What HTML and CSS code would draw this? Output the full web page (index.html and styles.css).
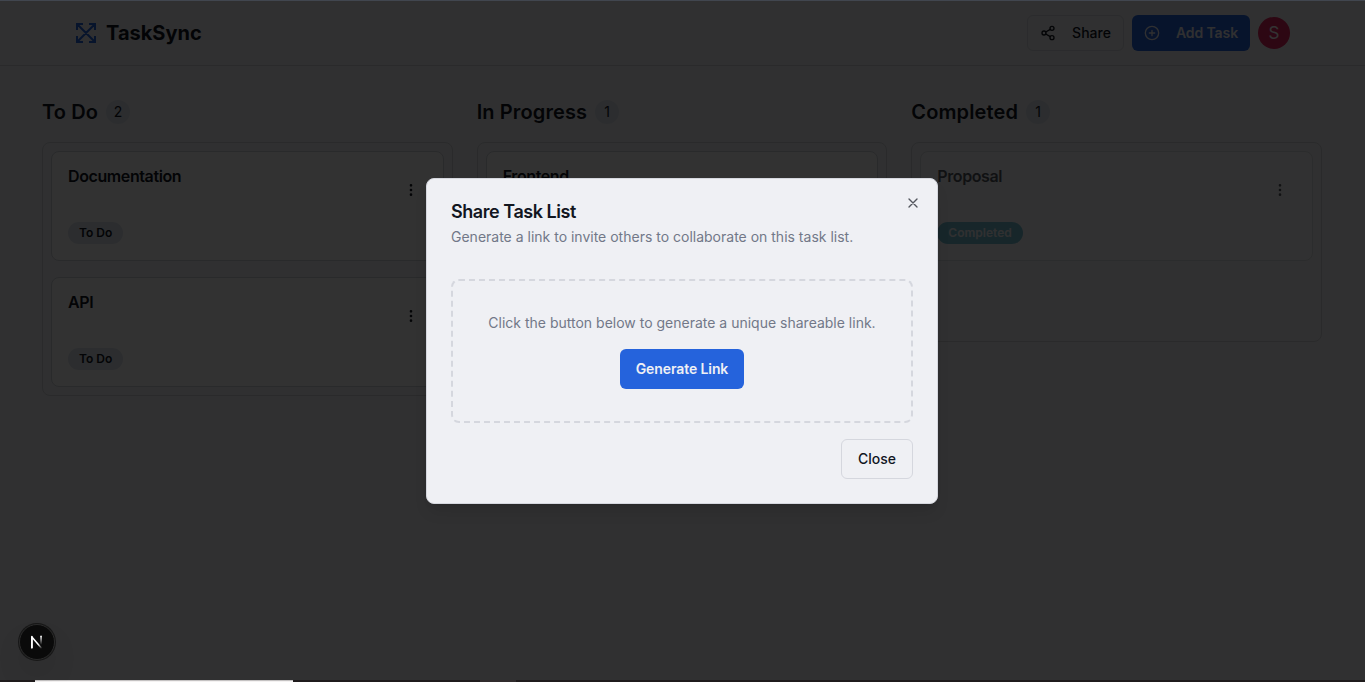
FILE: index.html
```html
<!DOCTYPE html>
<html lang="en">
<head>
<meta charset="utf-8">
<title>TaskSync</title>
<link rel="stylesheet" href="styles.css">
</head>
<body>
<div class="app">
  <header class="header">
    <div class="header-inner">
      <div class="brand">
        <svg class="brand-icon" viewBox="0 0 24 24"><path d="M9 3H3v6M15 3h6v6M9 21H3v-6M15 21h6v-6M3 3l18 18M21 3L3 21"/></svg>
        <span>TaskSync</span>
      </div>
      <div class="actions">
        <button class="btn btn-sm btn-outline"><svg class="icon" viewBox="0 0 24 24"><circle cx="18" cy="5" r="3"/><circle cx="6" cy="12" r="3"/><circle cx="18" cy="19" r="3"/><path d="M8.59 13.51l6.83 3.98M15.41 6.51l-6.82 3.98"/></svg>Share</button>
        <button class="btn btn-sm btn-primary"><svg class="icon" viewBox="0 0 24 24"><circle cx="12" cy="12" r="10"/><path d="M8 12h8M12 8v8"/></svg>Add Task</button>
        <div class="avatar">S</div>
      </div>
    </div>
  </header>
  <main class="board">
    <section class="column">
      <h2 class="column-title">To Do <span class="count">2</span></h2>
      <div class="list">
        <article class="card">
          <h3 class="card-title">Documentation</h3>
          <svg class="dots" viewBox="0 0 24 24"><circle cx="12" cy="5" r="1"/><circle cx="12" cy="12" r="1"/><circle cx="12" cy="19" r="1"/></svg>
          <span class="badge">To Do</span>
        </article>
        <article class="card">
          <h3 class="card-title">API</h3>
          <svg class="dots" viewBox="0 0 24 24"><circle cx="12" cy="5" r="1"/><circle cx="12" cy="12" r="1"/><circle cx="12" cy="19" r="1"/></svg>
          <span class="badge">To Do</span>
        </article>
      </div>
    </section>
    <section class="column">
      <h2 class="column-title">In Progress <span class="count">1</span></h2>
      <div class="list">
        <article class="card">
          <h3 class="card-title">Frontend</h3>
        </article>
      </div>
    </section>
    <section class="column">
      <h2 class="column-title">Completed <span class="count">1</span></h2>
      <div class="list">
        <article class="card card-done">
          <h3 class="card-title">Proposal</h3>
          <svg class="dots" viewBox="0 0 24 24"><circle cx="12" cy="5" r="1"/><circle cx="12" cy="12" r="1"/><circle cx="12" cy="19" r="1"/></svg>
          <span class="badge badge-done">Completed</span>
        </article>
      </div>
    </section>
  </main>
</div>
<div class="overlay">
  <div class="dialog">
    <svg class="dialog-x" viewBox="0 0 24 24"><path d="M18 6L6 18M6 6l12 12"/></svg>
    <div class="dialog-head">
      <h2 class="dialog-title">Share Task List</h2>
      <p class="muted">Generate a link to invite others to collaborate on this task list.</p>
    </div>
    <div class="dropzone">
      <p class="muted">Click the button below to generate a unique shareable link.</p>
      <button class="btn btn-primary">Generate Link</button>
    </div>
    <div class="dialog-foot"><button class="btn btn-outline">Close</button></div>
  </div>
</div>
<div class="top-edge"></div>
<div class="bottom-edge"><span class="edge-light"></span><span class="edge-tab"></span></div>
<div class="dev-badge">
  <svg viewBox="0 0 36 36">
    <defs>
      <linearGradient id="diag" gradientUnits="userSpaceOnUse" x1="18" y1="18" x2="23" y2="25"><stop offset="0.3" stop-color="#fff"/><stop offset="1" stop-color="#fff" stop-opacity="0"/></linearGradient>
      <linearGradient id="stem" gradientUnits="userSpaceOnUse" x1="0" y1="12" x2="0" y2="21"><stop offset="0" stop-color="#fff"/><stop offset="1" stop-color="#fff" stop-opacity="0"/></linearGradient>
    </defs>
    <path d="M12.6 24V12.8L23 25" fill="none" stroke="url(#diag)" stroke-width="1.6"/>
    <path d="M12.6 24V12.2" stroke="#fff" stroke-width="1.6"/>
    <path d="M22.3 12v9" stroke="url(#stem)" stroke-width="1.6"/>
  </svg>
</div>
</body>
</html>
```

FILE: styles.css
```css
* { box-sizing: border-box; margin: 0; }
body {
  width: 1365px;
  height: 682px;
  overflow: hidden;
  position: relative;
  background: #eff0f4;
  color: #12161f;
  font: 14px/20px Inter, "Liberation Sans", sans-serif;
}
svg { display: block; fill: none; stroke: currentColor; stroke-width: 2; stroke-linecap: round; stroke-linejoin: round; flex: none; }
.app { padding-top: 1px; }
.header { height: 65px; border-bottom: 1px solid #d0d3d8; }
.header-inner { width: 1280px; height: 64px; margin: 0 42px; padding: 0 32px; display: flex; align-items: center; justify-content: space-between; }
.brand { display: flex; align-items: center; gap: 8px; font-size: 20px; line-height: 28px; font-weight: 700; }
.brand-icon { width: 24px; height: 24px; color: #2563dc; stroke-linecap: butt; stroke-linejoin: miter; }
.actions { display: flex; align-items: center; gap: 8px; }
.btn { display: inline-flex; align-items: center; justify-content: center; height: 40px; padding: 0 16px; border: 0; border-radius: 6px; font: 500 14px/20px Inter, "Liberation Sans", sans-serif; color: #12161f; background: none; white-space: nowrap; }
.btn-sm { height: 36px; padding: 0 12px; gap: 16px; }
.btn-outline { border: 1px solid #d5d7de; background: #eff0f4; }
.btn-primary { background: #2563dc; color: #eff0f4; font-weight: 600; letter-spacing: -.1px; }
.icon { width: 16px; height: 16px; }
.avatar { width: 32px; height: 32px; border-radius: 50%; background: #e0245e; color: #fff; display: flex; align-items: center; justify-content: center; font-size: 17px; }
.board { width: 1280px; margin: 0 42px; padding-top: 32px; display: grid; grid-template-columns: repeat(3, 1fr); gap: 24px; align-items: start; }
.column { display: flex; flex-direction: column; gap: 16px; }
.column-title { display: flex; align-items: center; gap: 8px; font-size: 20px; line-height: 28px; font-weight: 600; letter-spacing: .12px; }
.count { width: 24px; height: 24px; border-radius: 50%; background: #dbe1ea; font-size: 14px; line-height: 24px; font-weight: 400; text-align: center; letter-spacing: 0; }
.list { min-height: 200px; padding: 8px; border: 1px solid #d0d3d8; border-radius: 8px; display: flex; flex-direction: column; gap: 16px; }
.card { height: 110px; padding: 12px 16px 16px; border: 1px solid #cdd0d5; border-radius: 8px; background: #f9f9fa; display: grid; grid-template-columns: 1fr 32px; grid-template-rows: 52px auto; align-content: space-between; }
.card-title { font-size: 16px; line-height: 24px; font-weight: 600; letter-spacing: -.4px; }
.dots { width: 16px; height: 16px; align-self: center; justify-self: center; }
.badge { justify-self: start; height: 22px; padding: 0 11px; border-radius: 11px; background: #dae0e8; font-size: 12px; line-height: 22px; font-weight: 600; }
.card-done { opacity: .7; }
.badge-done { background: #40a8c4; color: #eff0f4; }
.overlay { position: absolute; inset: 0; background: rgba(0, 0, 0, .8); display: flex; align-items: center; justify-content: center; padding-right: 1px; }
.dialog { position: relative; width: 512px; padding: 24px; border: 1px solid #d5d7de; border-radius: 8px; background: #eff0f4; box-shadow: 0 10px 15px -3px rgba(0, 0, 0, .1), 0 4px 6px -4px rgba(0, 0, 0, .1); }
.dialog-x { position: absolute; top: 16px; right: 16px; width: 16px; height: 16px; opacity: .7; }
.dialog-head { display: flex; flex-direction: column; gap: 6px; }
.dialog-title { font-size: 18px; line-height: 18px; font-weight: 600; letter-spacing: -.45px; }
.muted { color: #727888; }
.dropzone { margin-top: 32px; padding: 32px; border: 2px dashed #d5d7de; border-radius: 8px; display: flex; flex-direction: column; align-items: center; gap: 16px; }
.dialog-foot { display: flex; justify-content: flex-end; margin-top: 16px; }
.top-edge { position: absolute; inset: 0 0 auto; height: 1px; background: #41464f; }
.bottom-edge { position: absolute; inset: auto 0 0; height: 2px; padding-left: 35px; background: #1f1b1c; display: flex; gap: 187px; }
.edge-light { width: 258px; background: #f4f2f2; border-top: 1px solid #c4c2c2; }
.edge-tab { width: 36px; background: #302b2c; }
.dev-badge { position: absolute; left: 19px; top: 624px; width: 36px; height: 36px; border-radius: 50%; background: #0a0a0a; border: 1px solid #2b2b2b; box-shadow: 0 0 0 1px #171717, 0 16px 32px -8px rgba(0, 0, 0, .24); }
```
